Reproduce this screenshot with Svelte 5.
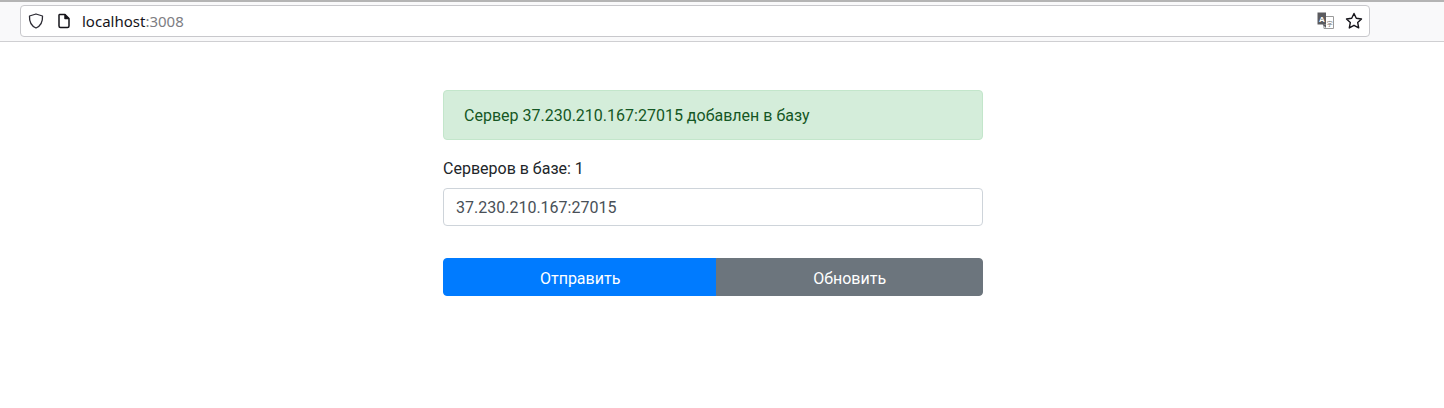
<script>
  let address = $state("37.230.210.167:27015");
  let count = $state(1);
  let message = $state("Сервер 37.230.210.167:27015 добавлен в базу");
</script>

<header class="chrome">
  <div class="urlbar">
    <svg class="shield" width="16" height="16" viewBox="0 0 16 16" fill="none" stroke="#2b2a33" stroke-width="1.3" stroke-linejoin="round">
      <path d="M8 1 L14.5 3 C14.8 8.5 13 12.8 8 15 C3 12.8 1.2 8.5 1.5 3 Z" />
    </svg>
    <svg class="page" width="14" height="16" viewBox="0 0 14 16" fill="none" stroke="#15141a" stroke-width="1.5" stroke-linejoin="round">
      <path d="M2.5 1.5 H8 L12 5.5 V13 A1.5 1.5 0 0 1 10.5 14.5 H3.5 A1.5 1.5 0 0 1 2 13 V2 Z" />
      <path d="M8 1.5 V5.5 H12" fill="#15141a" />
    </svg>
    <span class="host">localhost<span class="port">:3008</span></span>
    <svg class="translate" width="18" height="18" viewBox="0 0 18 18">
      <path d="M6 4.5 H16.5 V16.5 H7 Z" fill="#fff" stroke="#9a9a9a" />
      <path d="M0.5 0.5 H9 V12.5 H0.5 Z" fill="#5b5b5f" />
      <path d="M5.5 12.5 L9 16 V12.5 Z" fill="#5b5b5f" />
      <text x="4.8" y="9.5" class="glyph-a">A</text>
      <text x="12.8" y="14" class="glyph-b">字</text>
    </svg>
    <svg class="star" width="18" height="18" viewBox="0 0 18 18" fill="none" stroke="#15141a" stroke-width="1.4" stroke-linejoin="round">
      <path d="M9 1.5 L11.3 6.3 L16.5 7 L12.7 10.6 L13.7 15.9 L9 13.3 L4.3 15.9 L5.3 10.6 L1.5 7 L6.7 6.3 Z" />
    </svg>
  </div>
</header>

<main class="page-body">
  <div class="column">
    <div class="alert" role="alert">{message}</div>
    <p class="count">Серверов в базе: {count}</p>
    <input class="field" type="text" bind:value={address} />
    <div class="btn-group">
      <button class="btn primary" type="button">Отправить</button>
      <button class="btn secondary" type="button">Обновить</button>
    </div>
  </div>
</main>

<style>
  :global(body) {
    margin: 0;
    background: #fff;
    color: #212529;
    font-family: Roboto, "Liberation Sans", sans-serif;
    font-size: 16px;
    line-height: 1.5;
  }

  .chrome {
    box-sizing: border-box;
    height: 42px;
    padding: 3px 74px 0 20px;
    background: #f9f9fa;
    border-top: 2px solid #b4b4b4;
    border-bottom: 1px solid #cfcfd2;
  }
  .urlbar {
    box-sizing: border-box;
    height: 32px;
    display: flex;
    align-items: center;
    padding: 0 6px 0 7px;
    background: #fff;
    border: 1px solid #c8c8cc;
    border-radius: 4px;
  }
  .shield {
    flex: none;
  }
  .page {
    flex: none;
    margin-left: 13px;
  }
  .host {
    flex: 1;
    margin-left: 11px;
    font-family: "Noto Sans", "Open Sans", sans-serif;
    font-size: 15px;
    color: #15141a;
  }
  .port {
    color: #7d7d82;
  }
  .translate {
    flex: none;
  }
  .glyph-a {
    font-family: "Liberation Sans", sans-serif;
    font-size: 8px;
    font-weight: 700;
    fill: #fff;
    text-anchor: middle;
  }
  .glyph-b {
    font-family: "Noto Sans CJK SC", sans-serif;
    font-size: 6px;
    fill: #777;
    text-anchor: middle;
  }
  .star {
    flex: none;
    margin-left: 10px;
  }

  .page-body {
    padding: 48px 18px 0 0;
  }
  .column {
    width: 540px;
    margin: 0 auto;
  }
  .alert {
    padding: 13px 20px 11px;
    margin-bottom: 16px;
    background: #d4edda;
    border: 1px solid #c3e6cb;
    border-radius: 4px;
    color: #155724;
  }
  .count {
    margin: 0 0 7px;
    padding-top: 1px;
  }
  .field {
    display: block;
    box-sizing: border-box;
    width: 100%;
    height: 38px;
    padding: 6px 12px;
    font: inherit;
    color: #495057;
    background: #fff;
    border: 1px solid #ced4da;
    border-radius: 4px;
    outline: none;
  }
  .btn-group {
    display: flex;
    margin-top: 32px;
  }
  .btn {
    flex: 1 1 auto;
    height: 38px;
    padding: 8px 12px 6px;
    font: inherit;
    color: #fff;
    border: 1px solid transparent;
  }
  .primary {
    background: #007bff;
    border-color: #007bff;
    border-radius: 4px 0 0 4px;
  }
  .secondary {
    margin-left: -1px;
    background: #6c757d;
    border-color: #6c757d;
    border-radius: 0 4px 4px 0;
  }
</style>
